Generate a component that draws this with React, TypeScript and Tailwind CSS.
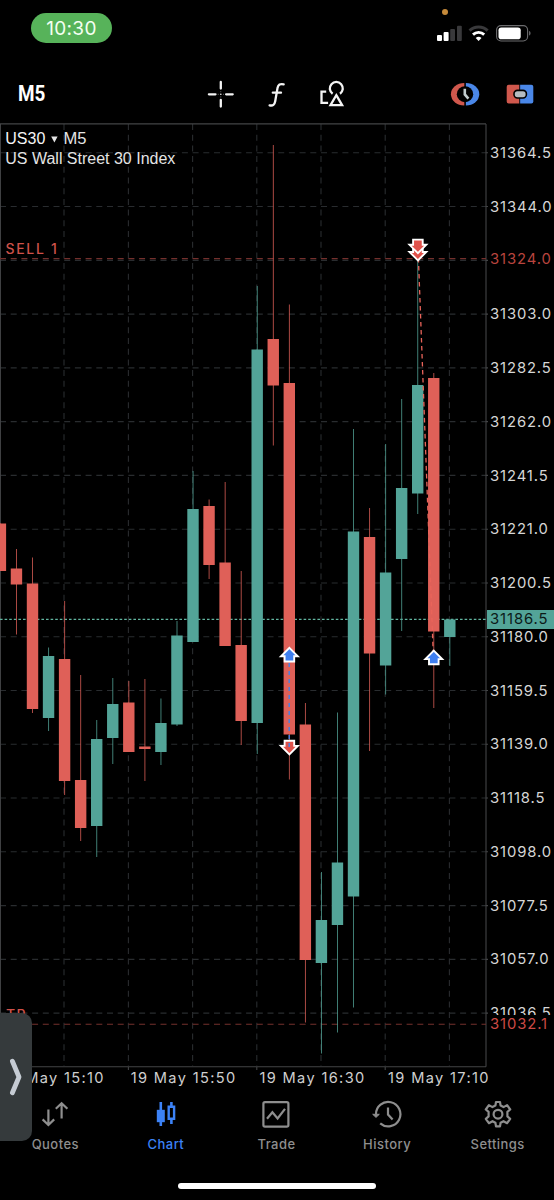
import React from "react";

type Candle = {
  high: number;
  top: number;
  bottom: number;
  low: number;
  up?: boolean;
};

const UP = "#53a498";
const DOWN = "#df6058";
const STEP = 16.05;
const BODY = 11.4;

// pixel rows of the chart viewBox, oldest bar first
const CANDLES: Candle[] = [
  { high: 523.5, top: 523.5, bottom: 571, low: 571 },
  { high: 549, top: 568.5, bottom: 584.5, low: 634.5 },
  { high: 557.5, top: 583.5, bottom: 709, low: 713 },
  { high: 647.5, top: 656, bottom: 718, low: 731, up: true },
  { high: 601, top: 659, bottom: 781, low: 795 },
  { high: 675, top: 780, bottom: 828, low: 841 },
  { high: 720, top: 739, bottom: 826, low: 857, up: true },
  { high: 678, top: 704, bottom: 738, low: 764, up: true },
  { high: 681, top: 702.5, bottom: 752, low: 752 },
  { high: 679, top: 746.5, bottom: 749, low: 781 },
  { high: 698.5, top: 723, bottom: 752, low: 765, up: true },
  { high: 621, top: 635.5, bottom: 724.5, low: 726, up: true },
  { high: 471, top: 509, bottom: 642, low: 642, up: true },
  { high: 499.5, top: 506, bottom: 565, low: 579 },
  { high: 482, top: 562.5, bottom: 646, low: 646 },
  { high: 571, top: 645, bottom: 721, low: 745 },
  { high: 286, top: 349.5, bottom: 723, low: 754, up: true },
  { high: 145, top: 339, bottom: 385.5, low: 445.5 },
  { high: 304.5, top: 383, bottom: 734.5, low: 779.5 },
  { high: 703, top: 724.5, bottom: 960, low: 1022.5 },
  { high: 872, top: 920, bottom: 963, low: 1053.5, up: true },
  { high: 712.5, top: 862.5, bottom: 925, low: 1032.5, up: true },
  { high: 429, top: 531.5, bottom: 896.5, low: 1007.5, up: true },
  { high: 508, top: 537, bottom: 653.5, low: 751 },
  { high: 444, top: 572.5, bottom: 665.5, low: 694.5, up: true },
  { high: 399, top: 488, bottom: 559, low: 631, up: true },
  { high: 258, top: 385, bottom: 493.5, low: 514, up: true },
  { high: 373, top: 378, bottom: 631.5, low: 708 },
  { high: 619.5, top: 619.5, bottom: 637, low: 666, up: true },
];

const PRICES = [
  "31364.5",
  "31344.0",
  "31324.0",
  "31303.0",
  "31282.5",
  "31262.0",
  "31241.5",
  "31221.0",
  "31200.5",
  "31180.0",
  "31159.5",
  "31139.0",
  "31118.5",
  "31098.0",
  "31077.5",
  "31057.0",
  "31036.5",
];

const TIMES = ["19 May 15:10", "19 May 15:50", "19 May 16:30", "19 May 17:10"];

const GRID_X = [64, 128.4, 192.6, 256.8, 321, 385.2, 449.4];

const StatusBar = () => (
  <div className="flex h-[60px] shrink-0 justify-between pl-[31px] pr-[22px] pt-[13px]">
    <div className="flex h-[30px] w-[81px] items-center justify-center rounded-full bg-[#57b35a] pt-[2px] text-[19px] tracking-[0.3px] text-[#f4fff2]">
      10:30
    </div>
    <svg className="-mt-[13px]" width="98" height="60" viewBox="434 0 98 60">
      <circle cx="445" cy="12" r="3" fill="#c58a3a" />
      <rect x="437" y="35" width="5" height="6" rx="1" fill="#fff" />
      <rect x="443.6" y="32" width="5" height="9" rx="1" fill="#fff" />
      <rect x="450.2" y="29" width="4.8" height="12" rx="1" fill="#39393b" />
      <rect x="457" y="25.7" width="4.8" height="15.3" rx="1" fill="#39393b" />
      <g fill="none" strokeLinecap="butt">
        <path d="M469.6 30.6a13 13 0 0 1 18 0" stroke="#39393b" strokeWidth="3" />
        <path d="M473 34.6a8.2 8.2 0 0 1 11.2 0" stroke="#fff" strokeWidth="2.9" />
      </g>
      <path d="M475.7 38.1a4.3 4.3 0 0 1 5.8 0l-2.9 3z" fill="#fff" />
      <rect x="496.6" y="25.6" width="31" height="15.4" rx="4.4" fill="none" stroke="#6c6c6e" strokeWidth="1.1" />
      <rect x="498.5" y="27.4" width="22.2" height="11.8" rx="2.8" fill="#fff" />
      <path d="M529.2 31c1.7.5 1.7 4 0 4.6z" fill="#77777a" />
    </svg>
  </div>
);

const Toolbar = () => (
  <div className="flex h-[63px] shrink-0 items-center pt-[4px] pr-[20px] pl-[18px]">
    <div className="w-[188px] pt-[2px]">
      <span className="inline-block origin-left scale-x-[0.84] font-[Roboto,sans-serif] text-[22.5px] leading-none font-bold">
        M5
      </span>
    </div>
    <div className="flex items-center gap-[25px]">
      <svg width="30" height="30" viewBox="0 0 30 30" fill="none" stroke="#f4f4f4" strokeWidth="2.3" strokeLinecap="round">
        <path d="M14.8 3v6.6M14.8 21v6.6M2.9 15.3h6.6M20.1 15.3h6.6" />
        <path d="M14.8 15.3h.01" strokeWidth="1.6" />
        <path d="M12.2 15.3h.01M17.4 15.3h.01M14.8 12.7h.01M14.8 17.9h.01" strokeWidth="0.8" stroke="#999" />
      </svg>
      <svg width="30" height="30" viewBox="0 0 30 30" fill="none" stroke="#f4f4f4" strokeWidth="2.3" strokeLinecap="round" strokeLinejoin="round">
        <path d="M22.7 5.3c-3.6-.9-5.5.4-6.2 3.8l-2.3 13.1c-.7 3.6-2.2 4.9-5.6 4.1" />
        <path d="M11.8 13.7h8.2" />
      </svg>
      <svg width="30" height="30" viewBox="0 0 30 30" fill="none" stroke="#f4f4f4" strokeWidth="2.3">
        <path d="M10.2 12.6H5.5v11.3h6.6" />
        <path d="M16.6 14.8a6.5 6.5 0 1 1 7.4 0" />
        <path d="M20.3 16.2l5.8 10H14.5z" strokeLinejoin="miter" />
      </svg>
    </div>
    <div className="ml-auto flex items-center gap-[26px]">
      <svg width="30" height="28" viewBox="0 0 30 28">
        <path d="M14.3 3.1A13.2 11 0 0 0 14.3 25.4z" fill="#d0584d" />
        <path d="M15.9 3.1A13.2 11 0 0 1 15.9 25.4z" fill="#4a87e8" />
        <ellipse cx="15" cy="14.2" rx="8.2" ry="8" fill="#000" />
        <path d="M14.8 8.8v5.6l3.6 4.2" fill="none" stroke="#c2ccce" strokeWidth="2.6" />
      </svg>
      <svg width="28" height="28" viewBox="0 0 28 28">
        <path d="M2.7 4.7h11v18.7h-11a2 2 0 0 1-2-2V6.7a2 2 0 0 1 2-2z" fill="#d0584d" />
        <path d="M13.7 4.7h11.6a2 2 0 0 1 2 2v14.7a2 2 0 0 1-2 2H13.7z" fill="#4a87e8" />
        <path d="M13.7 4v20" stroke="#000" strokeWidth="0.8" />
        <rect x="8" y="10.4" width="12.4" height="7.6" rx="3.4" fill="#b5bcc1" stroke="#000" strokeWidth="1.6" />
      </svg>
    </div>
  </div>
);

const DealArrow = ({ x, y, buy }: { x: number; y: number; buy?: boolean }) => (
  <path
    d="M0-6.8L8.4 1.6H4.8V6.8H-4.8V1.6H-8.4z"
    transform={`translate(${x} ${y})${buy ? "" : " rotate(180)"}`}
    fill={buy ? "#3f7ff0" : "#e0524b"}
    stroke="#fff"
    strokeWidth="1.9"
  />
);

const CandleChart = () => (
  <svg className="block shrink-0" width="488" height="948" viewBox="0 123 488 948">
    <g stroke="#292c2f" strokeWidth="1.1" strokeDasharray="6 4.7">
      {PRICES.map((p, i) => {
        const y = 152.8 + i * 53.77;
        return <path key={p} d={`M0 ${y}H486`} />;
      })}
      {GRID_X.map((x) => (
        <path key={x} d={`M${x} 124V1066`} />
      ))}
    </g>
    <g stroke="#434446" strokeWidth="1.1">
      <path d="M0 123.9H486M486 124V1066.7M0 1066.7H486M.4 124V1066" fill="none" />
      {PRICES.map((p, i) => {
        const y = 152.8 + i * 53.77;
        return <path key={p} d={`M486 ${y}h2`} />;
      })}
      <path d="M128.4 1067v3M256.8 1067v3M385.2 1067v3" />
    </g>

    <path d="M0 258.6H486M0 1024.3H486" stroke="#74302d" strokeWidth="1.1" strokeDasharray="6 4.7" />
    <path d="M0 619.4H486" stroke="#62b5a0" strokeWidth="1.2" strokeDasharray="2.6 2" />

    {CANDLES.map((c, i) => {
      const x = 0.4 + i * STEP;
      const color = c.up ? UP : DOWN;
      return (
        <g key={i} fill={color}>
          <rect x={x - 0.4} y={c.high} width="0.9" height={c.low - c.high} opacity="0.85" />
          <rect x={x - BODY / 2} y={c.top} width={BODY} height={c.bottom - c.top} />
        </g>
      );
    })}

    <path d="M418.4 258L433.3 655" stroke="#e9645a" strokeWidth="1.3" strokeDasharray="4.6 3.4" />
    <DealArrow x={289.4} y={747.5} />
    <path d="M289.2 655V748" stroke="#4d7fe0" strokeWidth="1.5" strokeDasharray="4 4" />
    <DealArrow x={289.4} y={654.7} buy />
    <DealArrow x={417.9} y={253.6} />
    <DealArrow x={417.9} y={246.4} />
    <DealArrow x={433.8} y={657.5} buy />

    <g fill="#cf524a" fontSize="14" fontWeight="500" fontFamily="Inter, sans-serif">
      <text x="5.4" y="253.9" textLength="51.5">
        SELL 1
      </text>
      <text x="6" y="1020.4" textLength="19.5">
        TP
      </text>
    </g>
    <g fill="#e4e4e4" fontSize="16" fontFamily="Liberation Sans, sans-serif">
      <text x="5.3" y="143.9" textLength="40" lengthAdjust="spacingAndGlyphs" fill="#f5f5f5">
        US30
      </text>
      <path d="M51.2 136.4h6.4l-3.2 6.2z" />
      <text x="63.4" y="143.9" textLength="23" lengthAdjust="spacingAndGlyphs">
        M5
      </text>
      <text x="5.3" y="163.9" textLength="170" lengthAdjust="spacingAndGlyphs">
        US Wall Street 30 Index
      </text>
    </g>
  </svg>
);

const PriceScale = () => (
  <div className="relative flex flex-1 flex-col pt-[3.2px] text-[14.8px] tracking-[0.9px] text-[#d6d6d6]">
    {PRICES.slice(0, -1).map((p) => (
      <div
        key={p}
        className={`flex h-[53.77px] shrink-0 items-center pl-[2px] ${
          p === "31324.0" ? "pb-[3px] text-[#b8443e]" : ""
        }`}
      >
        {p}
      </div>
    ))}
    {/* the take profit tag hides the lower part of the last label */}
    <div className="mt-[15.8px] h-[13px] shrink-0 overflow-hidden pl-[2px]">
      {PRICES[PRICES.length - 1]}
    </div>
    <div className="absolute top-[487px] -left-px flex h-[19px] w-[67px] items-center bg-[#53a498] pl-[3px] text-[#0c1a18]">
      31186.5
    </div>
    <div className="absolute top-[892px] left-0 flex h-[18px] w-[66px] items-center pl-[2px] text-[#cc4a45]">
      31032.1
    </div>
  </div>
);

const TABS = [
  {
    label: "Quotes",
    icon: (
      <path d="M8.4 9.4v15.4M2.6 19.4l5.8 5.6 5.8-5.6M21.6 18.4V3.4M15.8 8.8l5.8-5.6 5.8 5.6" />
    ),
  },
  {
    label: "Chart",
    active: true,
    icon: (
      <>
        <path d="M9.8 2v24" strokeWidth="2.6" />
        <path d="M5.8 9.8h8v12.4h-8z" fill="currentColor" stroke="none" />
        <path d="M20.4 2v5M20.4 19v5" strokeWidth="2.6" />
        <path d="M17.7 6.8h5.4v12h-5.4z" strokeWidth="2.4" />
      </>
    ),
  },
  {
    label: "Trade",
    icon: (
      <>
        <rect x="2.4" y="2.2" width="25" height="24.4" rx="1.6" />
        <path d="M6 18.8l5.4-6.6 5.2 6.2L24 8.8" />
      </>
    ),
  },
  {
    label: "History",
    icon: (
      <>
        <path d="M4 14.4A12.2 12.2 0 1 1 8.2 23.4" />
        <path d="M.7 14.3h6.6L4 17.4z" fill="currentColor" strokeWidth="1" />
        <path d="M16 7.6v7l4.6 5" />
      </>
    ),
  },
  {
    label: "Settings",
    icon: (
      <>
        <path
          d="M13 2h4l.6 3.6 2.9 1.5 3.6-2 3.1 4.4-2.8 2.4v4.5l2.8 2.4-3.1 4.4-3.6-2-2.9 1.6L17 26.4h-4l-.6-3.6-2.9-1.6-3.6 2-3.1-4.4 2.8-2.4v-4.5L2.8 9.5l3.1-4.4 3.6 2 2.9-1.5z"
          strokeLinejoin="round"
        />
        <circle cx="15" cy="14.2" r="4.4" />
      </>
    ),
  },
];

const TabBar = () => (
  <div className="flex h-[72px] w-[553px] shrink-0 pt-[11px]">
    {TABS.map((tab) => (
      <div
        key={tab.label}
        className={`flex flex-1 flex-col items-center ${
          tab.active ? "text-[#3c82f6]" : "text-[#8e8e8e]"
        }`}
      >
        <svg width="30" height="29" viewBox="0 0 30 29" fill="none" stroke="currentColor" strokeWidth="2.2">
          {tab.icon}
        </svg>
        <span className="mt-[6px] text-[13px] leading-[18px] font-medium tracking-[0.45px]">
          {tab.label}
        </span>
      </div>
    ))}
  </div>
);

const App = () => (
  <div className="relative flex h-[1200px] w-[554px] flex-col overflow-hidden bg-black font-[Inter,sans-serif] text-white">
    <StatusBar />
    <Toolbar />
    <div className="flex h-[944px] shrink-0 overflow-visible">
      <CandleChart />
      <PriceScale />
    </div>
    <div className="flex h-[22px] shrink-0 items-center pt-[2px] pl-[2px] text-[14.6px] tracking-[1.35px] text-[#cfcfcf]">
      {TIMES.map((time) => (
        <div key={time} className="w-[128.7px] shrink-0 whitespace-nowrap">
          {time}
        </div>
      ))}
    </div>
    <TabBar />
    <div className="mx-auto mt-[22px] h-[6px] w-[198px] shrink-0 rounded-full bg-white" />

    <div className="absolute top-[1013px] left-0 flex h-[128px] w-8 items-center rounded-r-[10px] bg-[#353a3c] pl-[8px]">
      <svg width="16" height="40" viewBox="0 0 16 40" fill="none" stroke="#c5cbd3" strokeWidth="4.8" strokeLinecap="round" strokeLinejoin="round">
        <path d="M4.4 4.2L11 20 4.4 35.8" />
      </svg>
    </div>
  </div>
);

export default App;
